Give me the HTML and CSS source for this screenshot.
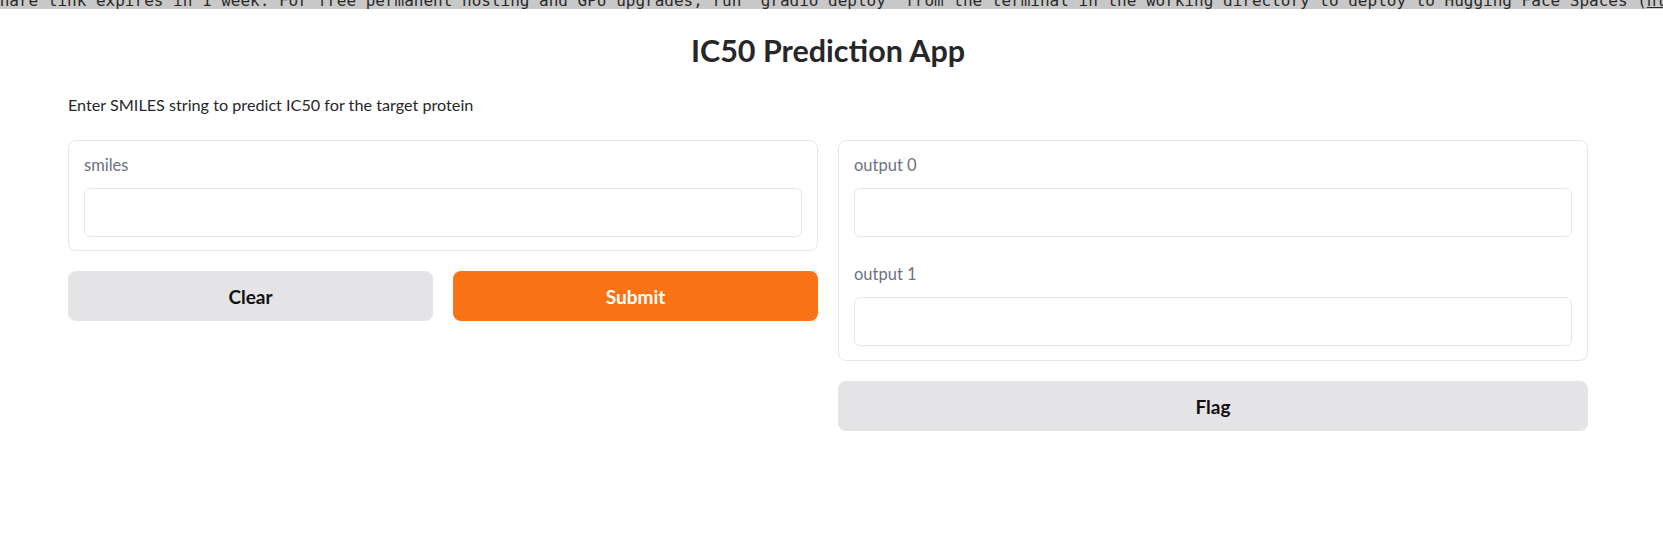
FILE: index.html
```html
<!DOCTYPE html>
<html lang="en">
<head>
<meta charset="utf-8">
<title>IC50 Prediction App</title>
<link rel="stylesheet" href="styles.css">
</head>
<body>
<div class="notice"><span class="notice-text">share link expires in 1 week. For free permanent hosting and GPU upgrades, run `gradio deploy` from the terminal in the working directory to deploy to Hugging Face Spaces (<u>https://huggingface.co/spaces</u>)</span></div>
<main class="app">
  <h1 class="title">IC50 Prediction App</h1>
  <p class="desc">Enter SMILES string to predict IC50 for the target protein</p>
  <div class="columns">
    <div class="col">
      <div class="panel">
        <div class="field">
          <label class="label">smiles</label>
          <div class="input"></div>
        </div>
      </div>
      <div class="btn-row">
        <button class="btn btn-secondary">Clear</button>
        <button class="btn btn-primary">Submit</button>
      </div>
    </div>
    <div class="col">
      <div class="panel">
        <div class="field">
          <label class="label">output 0</label>
          <div class="input"></div>
        </div>
        <div class="field field-second">
          <label class="label">output 1</label>
          <div class="input"></div>
        </div>
      </div>
      <button class="btn btn-secondary btn-full">Flag</button>
    </div>
  </div>
</main>
</body>
</html>
```

FILE: styles.css
```css
* { box-sizing: border-box; }
html, body { margin: 0; padding: 0; background: #ffffff; }
body { font-family: Lato, "Noto Sans", sans-serif; color: #27272a; }

.notice {
  height: 9px;
  overflow: hidden;
  background: #c8c8c8;
  white-space: nowrap;
}
.notice-text {
  display: block;
  margin-left: -10px;
  margin-top: -9px;
  font-family: "DejaVu Sans Mono", monospace;
  font-size: 16px;
  line-height: 20px;
  color: #2a2a2a;
}

.app {
  width: 1520px;
  margin-left: 68px;
}
.title {
  margin: 21px 0 0;
  height: 40px;
  line-height: 40px;
  text-align: center;
  font-size: 30.5px;
  font-weight: 700;
  color: #27272a;
}
.desc {
  margin: 24px 0 0;
  height: 22px;
  line-height: 22px;
  font-size: 16.2px;
  color: #27272a;
}
.columns {
  margin-top: 24px;
  display: flex;
  gap: 20px;
  align-items: flex-start;
}
.col {
  flex: 1 1 0;
  display: flex;
  flex-direction: column;
  gap: 20px;
}
.panel {
  border: 1px solid #e5e7eb;
  border-radius: 8px;
  background: #fff;
}
.field {
  padding: 14px 15px 13px;
  display: flex;
  flex-direction: column;
  gap: 13px;
}
.field-second {
  padding-top: 14px;
  padding-bottom: 14px;
}
.label {
  height: 20px;
  line-height: 20px;
  font-size: 16.5px;
  color: #6b7280;
}
.input {
  height: 49px;
  border: 1px solid #e5e7eb;
  border-radius: 6px;
  background: #fff;
}
.btn-row {
  display: flex;
  gap: 20px;
}
.btn {
  flex: 1 1 0;
  height: 50px;
  border: none;
  border-radius: 8px;
  font-family: Lato, "Noto Sans", sans-serif;
  font-size: 19px;
  font-weight: 700;
  cursor: pointer;
}
.btn-secondary { background: #e4e4e7; color: #111111; }
.btn-primary { background: #f97316; color: #ffffff; }
.btn-full { width: 100%; flex: none; }
```
